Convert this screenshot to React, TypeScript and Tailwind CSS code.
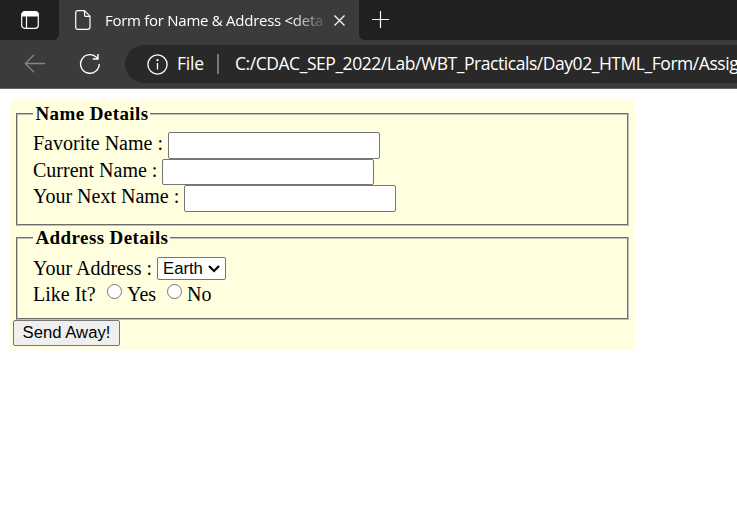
import type { ReactNode } from "react";

function Row({ label, labelClass, className, children }: { label: string; labelClass: string; className: string; children?: ReactNode }) {
  return (
    <div className={`flex items-start ${className}`}>
      <label className={`shrink-0 whitespace-pre ${labelClass}`}>{label}</label>
      {children}
    </div>
  );
}

function TextInput({ className }: { className: string }) {
  return <input type="text" className={`w-[212px] shrink-0 rounded-[2px] border border-[#767676] bg-white ${className}`} />;
}

function Radio() {
  return <input type="radio" name="like" className="mt-[2px] size-[15px] shrink-0 appearance-none rounded-full border border-[#767676] bg-white" />;
}

const fieldset = "ml-[6px] w-[613px] border-2 border-[#c0c0c0] [border-style:groove] pl-[15px]";
const legend = "h-6 pr-[2px] pl-[2.5px] text-[19px] leading-[24px] font-bold tracking-[0.4px] whitespace-nowrap";

export default function App() {
  return (
    <div className="h-[522px] w-[737px] overflow-hidden bg-white">
      <header className="h-[89px] border-b border-[#666] bg-[#3b3b3b] font-['Open_Sans','Noto_Sans',sans-serif] text-white">
        <div className="flex h-10 bg-[#3b3b3b]">
          <div className="h-10 w-[59px] rounded-br-[6px] bg-[#202020] pt-[11px] pl-[21px]">
            <svg width="18" height="18" viewBox="0 0 18 18" fill="none" stroke="#fff">
              <rect x=".7" y=".7" width="16.6" height="16.6" rx="3" strokeWidth="1.2" />
              <path d="M1 3.5Q1 1 3.5 1h11Q17 1 17 3.5V5H1Z" fill="#fff" />
              <path d="M5.5 5v12" strokeWidth="1.2" />
            </svg>
          </div>
          <div className="flex h-10 w-[300px] bg-[#3b3b3b]">
            <svg className="mt-[10px] ml-4 shrink-0" width="16" height="20" viewBox="0 0 16 20" fill="none" stroke="#fff" strokeWidth="1.2" strokeLinejoin="round">
              <path d="M3 .7h6.5L15 6.2V17q0 2.3-2.3 2.3H3Q.7 19.3.7 17V3Q.7.7 3 .7Z" />
              <path d="M9.5.9v4.2q0 1.3 1.3 1.3h4" />
            </svg>
            <span className="mt-[9px] ml-[14px] w-[219px] shrink-0 overflow-hidden text-[15px] leading-[22px] tracking-[-0.27px] whitespace-nowrap [mask-image:linear-gradient(to_right,#000_186px,transparent_224px)]">
              Form for Name &amp; Address &lt;deta
            </span>
            <svg className="mt-[15px] ml-[10px] shrink-0" width="11" height="11" viewBox="0 0 11 11" fill="none" stroke="#fff" strokeWidth="1.2">
              <path d="m.5.5 10 10m0-10-10 10" />
            </svg>
          </div>
          <div className="h-10 flex-1 rounded-bl-[6px] bg-[#202020] pt-[11px] pl-[13px]">
            <svg width="18" height="18" viewBox="0 0 18 18" stroke="#fff" strokeWidth="1.2">
              <path d="M8.5 0v17M0 8.5h17" />
            </svg>
          </div>
        </div>
        <div className="flex h-[48px] items-start pt-[5px]">
          <svg className="mt-[9px] ml-[24px] shrink-0" width="22" height="19" viewBox="0 0 22 19" fill="none" stroke="#858585" strokeWidth="1.3">
            <path d="M10 .8 1.4 9.5l8.6 8.7M1.4 9.5H21" />
          </svg>
          <svg className="mt-[8px] ml-[33px] shrink-0" width="22" height="22" viewBox="0 0 22 22" fill="none" stroke="#fff" strokeWidth="1.4">
            <path d="M20.2 11A9.3 9.3 0 1 1 16.8 3.8L19 6M19 1v5h-5.3" />
          </svg>
          <div className="ml-[24px] flex h-[38px] flex-1 items-start overflow-hidden rounded-l-full bg-[#292929] text-[17.5px] leading-[24px] whitespace-nowrap">
            <svg className="mt-[9px] ml-[22px] shrink-0" width="21" height="21" viewBox="0 0 21 21" fill="none" stroke="#fff" strokeWidth="1.3">
              <circle cx="10.5" cy="10.5" r="9.6" />
              <path d="M10.5 9v6.5" />
              <circle cx="10.5" cy="6.2" r=".5" fill="#fff" />
            </svg>
            <span className="mt-[6px] ml-[9px] w-[28px] shrink-0 tracking-[-0.2px]">File</span>
            <span className="mt-[9px] ml-[12px] h-5 w-[2px] shrink-0 bg-[#777]" />
            <span className="mt-[6px] ml-[16px] shrink-0 tracking-[-0.45px]">C:/CDAC_SEP_2022/Lab/WBT_Practicals/Day02_HTML_Form/Assig</span>
          </div>
        </div>
      </header>
      <form className="mt-[10px] ml-[10px] h-[251px] w-[625px] bg-[#ffffe0] pt-[3px] font-['Liberation_Serif',serif] text-[20px] leading-[24px] text-black">
        <fieldset className={`${fieldset} h-[124px]`}>
          <legend className={legend}>Name Details</legend>
          <Row className="mt-[6px] h-[27px]" label="Favorite Name :" labelClass="w-[135px] leading-[22px]">
            <TextInput className="h-[27px]" />
          </Row>
          <Row className="h-[26px]" label="Current Name :" labelClass="w-[129px] leading-[22px]">
            <TextInput className="h-[26px]" />
          </Row>
          <Row className="h-[27px]" label="Your Next Name :" labelClass="w-[151px] leading-[22px]">
            <TextInput className="h-[27px]" />
          </Row>
        </fieldset>
        <fieldset className={`${fieldset} h-[94px]`}>
          <legend className={legend}>Address Details</legend>
          <Row className="mt-[6px] h-[26px]" label="Your Address :" labelClass="w-[124px] leading-[24px]">
            <div className="mt-[1px] flex h-[23px] w-[69px] items-center rounded-[2px] border border-[#767676] bg-white pl-[5px] font-['Liberation_Sans',sans-serif] text-[16.7px] leading-[20px]">
              <span className="w-[45px]">Earth</span>
              <svg width="12" height="8" viewBox="0 0 12 8" fill="none" stroke="#000" strokeWidth="2.2">
                <path d="m1 1 5 5 5-5" />
              </svg>
            </div>
          </Row>
          <Row className="h-[26px]" label="Like It?" labelClass="w-[74px] leading-[24px]">
            <Radio />
            <label className="ml-[5px] w-[40px] leading-[24px]">Yes</label>
            <Radio />
            <label className="ml-[5px] leading-[24px]">No</label>
          </Row>
        </fieldset>
        <button type="button" className="ml-[3px] block h-[26px] w-[107px] rounded-[2px] border border-[#767676] bg-[#efefef] font-['Liberation_Sans',sans-serif] text-[16.7px] leading-[22px] whitespace-nowrap">
          Send Away!
        </button>
      </form>
    </div>
  );
}
